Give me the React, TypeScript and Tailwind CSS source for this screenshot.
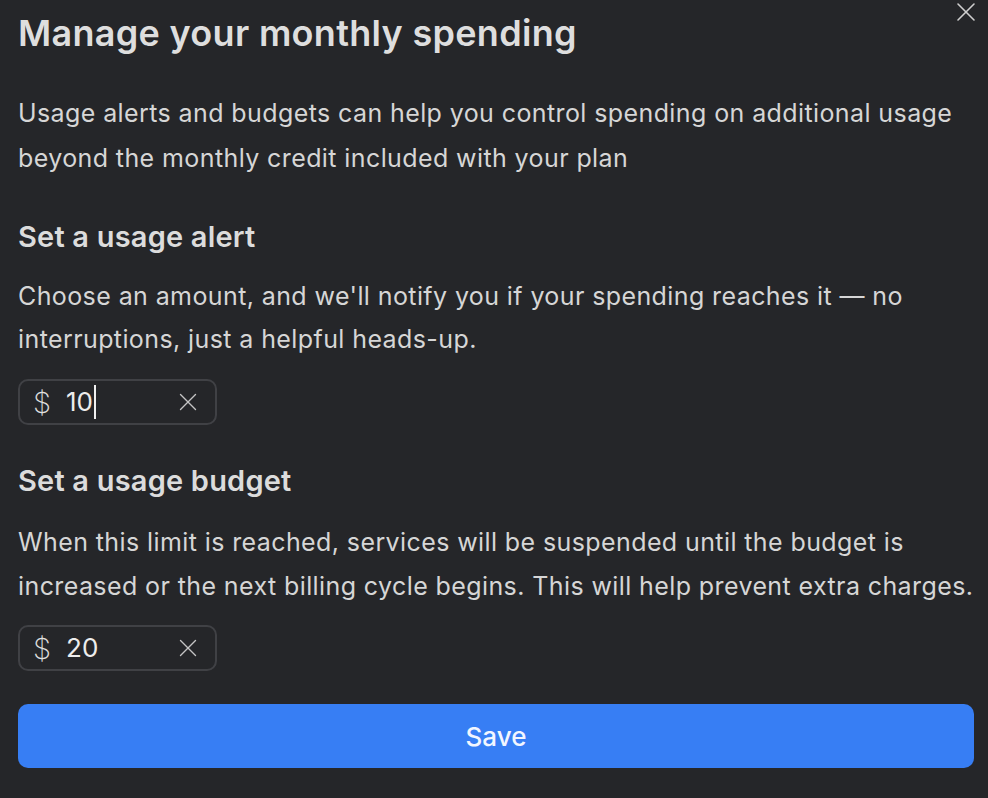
import React, { useState } from 'react';
import { X } from 'lucide-react';

function AmountInput({ value, onClear, showCaret }: { value: string; onClear: () => void; showCaret?: boolean }) {
  return (
    <div className="flex items-center w-[199px] h-[46px] rounded-[10px] border-2 border-[#404145] pl-[13px] pr-[12px]">
      <span className="text-[29px] font-extralight text-[#e0e0e0] leading-none">$</span>
      <div className="flex items-center flex-1 ml-[15px] h-full">
        <span className="text-[26px] text-[#ededed] leading-none">{value}</span>
        {showCaret && <span className="ml-[1px] w-[2px] h-[34px] bg-[#f0f0f0]" />}
      </div>
      <button onClick={onClear} className="text-[#c4c4c4]">
        <X className="w-[30px] h-[30px]" strokeWidth={1.1} />
      </button>
    </div>
  );
}

export default function App() {
  const [alert, setAlert] = useState('10');
  const [budget, setBudget] = useState('20');

  return (
    <div className="w-[988px] h-[798px] bg-[#252629] text-[#dcdcdc] relative" style={{ fontFamily: 'Inter, "Noto Sans", sans-serif' }}>
      <button className="absolute right-[6px] top-[-4px] text-[#cfcfcf]">
        <X className="w-[32px] h-[32px]" strokeWidth={1.2} />
      </button>

      <div className="pl-[18px] pr-[14px] pt-[10px]">
        <h1 className="text-[36px] font-semibold tracking-[0.3px] leading-[46px] text-[#dedede]">Manage your monthly spending</h1>

        <p className="mt-[35px] text-[25px] tracking-[0.4px] leading-[45px] text-[#d6d6d6]">
          Usage alerts and budgets can help you control spending on additional usage beyond the monthly credit included with your plan
        </p>

        {/* usage alert */}
        <h2 className="mt-[36px] text-[29px] font-semibold tracking-[0.2px] leading-[40px] text-[#dcdcdc]">Set a usage alert</h2>
        <p className="mt-[18px] text-[25px] tracking-[0.4px] leading-[43px] text-[#d6d6d6]">
          Choose an amount, and we'll notify you if your spending reaches it — no interruptions, just a helpful heads-up.
        </p>
        <div className="mt-[18px]">
          <AmountInput value={alert} onClear={() => setAlert('')} showCaret />
        </div>

        {/* usage budget */}
        <h2 className="mt-[36px] text-[29px] font-semibold tracking-[0.2px] leading-[40px] text-[#dcdcdc]">Set a usage budget</h2>
        <p className="mt-[19px] text-[25px] tracking-[0.4px] leading-[44px] text-[#d6d6d6]">
          When this limit is reached, services will be suspended until the budget is increased or the next billing cycle begins. This will help prevent extra charges.
        </p>
        <div className="mt-[17px]">
          <AmountInput value={budget} onClear={() => setBudget('')} />
        </div>

        <button className="mt-[33px] w-full h-[64px] rounded-[10px] bg-[#377ef4] text-[26px] font-medium text-[#f2f6ff]">
          Save
        </button>
      </div>
    </div>
  );
}
